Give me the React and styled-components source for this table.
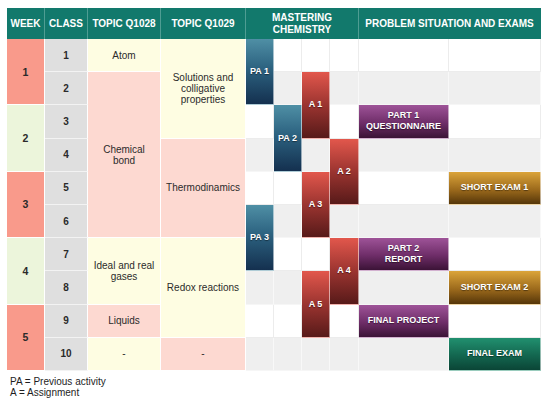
import React from "react";
import styled, { createGlobalStyle, css } from "styled-components";

const Global = createGlobalStyle`
  html, body { margin: 0; padding: 0; background: #ffffff; }
  body { font-family: "Liberation Sans", Arial, Helvetica, sans-serif; }
`;

const Page = styled.div`
  padding: 8px 0 0 7px;
  width: 550px;
  height: 403px;
  box-sizing: border-box;
  overflow: hidden;
`;

const Table = styled.div`
  display: grid;
  grid-template-columns: 38px 43px 73px 85px 28px 28px 28px 29px 90px 92px;
  grid-template-rows: 31px repeat(10, 33.2px);
  width: 534px;
`;

const place = css`
  grid-column: ${(p) => p.$col} / span ${(p) => p.$cspan || 1};
  grid-row: ${(p) => p.$row} / span ${(p) => p.$rspan || 1};
  box-sizing: border-box;
  display: flex;
  align-items: center;
  justify-content: center;
  text-align: center;
  white-space: nowrap;
`;

const HeadCell = styled.div`
  ${place};
  background: #12796c;
  color: #ffffff;
  font-weight: 700;
  font-size: 10px;
  line-height: 12px;
  border-right: 1px solid ${(p) => (p.$last ? "#12796c" : "#4f9d93")};
`;

const weekTones = { red: "#f99a8b", green: "#ecf5db" };
const WeekCell = styled.div`
  ${place};
  background: ${(p) => weekTones[p.$tone]};
  color: #2a2a2a;
  font-weight: 700;
  font-size: 10.5px;
  border-right: 1px solid #ffffff;
  border-bottom: 1px solid #ffffff;
`;

const ClassCell = styled.div`
  ${place};
  background: #dfdfdf;
  color: #2a2a2a;
  font-weight: 700;
  font-size: 10px;
  border-right: 1px solid #ffffff;
  border-bottom: 1px solid #f3f3f3;
`;

const topicTones = { yellow: "#fefde2", pink: "#fdd9d1" };
const TopicCell = styled.div`
  ${place};
  background: ${(p) => topicTones[p.$tone]};
  color: #2b2b2b;
  font-size: 10px;
  line-height: 11px;
  border-right: 1px solid #ffffff;
  border-bottom: 1px solid #ffffff;
`;

const SlotCell = styled.div`
  ${place};
  background: ${(p) => (p.$shade ? "#efefef" : "#ffffff")};
  border-right: 1px solid ${(p) => (p.$shade ? "#f8f8f8" : "#ececec")};
  border-bottom: 1px solid ${(p) => (p.$shade ? "#f6f6f6" : "#ececec")};
`;

const gradients = {
  pa: "linear-gradient(180deg, #4f8fa5 0%, #2c6280 45%, #14304f 100%)",
  a: "linear-gradient(180deg, #e2574c 0%, #9b3430 50%, #571a19 100%)",
  part: "linear-gradient(180deg, #9e5398 0%, #6e2d68 55%, #3b1336 100%)",
  exam: "linear-gradient(180deg, #dba43a 0%, #9c6a1c 55%, #553609 100%)",
  final: "linear-gradient(180deg, #21906f 0%, #13664f 55%, #0b4536 100%)",
};

const Block = styled.div`
  ${place};
  position: relative;
  z-index: 1;
  background: ${(p) => gradients[p.$kind]};
  color: #ffffff;
  font-weight: 700;
  font-size: 9px;
  line-height: 11px;
  text-shadow: 0 1px 1px rgba(0, 0, 0, 0.45);
  border-right: 1px solid rgba(255, 255, 255, 0.55);
  border-bottom: 1px solid rgba(255, 255, 255, 0.55);
`;

const Legend = styled.div`
  margin-top: 5px;
  padding-left: 3px;
  font-size: 10px;
  line-height: 11px;
  color: #1e1e1e;
`;

const headers = [
  { t: "WEEK", col: 1 },
  { t: "CLASS", col: 2 },
  { t: "TOPIC Q1028", col: 3 },
  { t: "TOPIC Q1029", col: 4 },
  { t: ["MASTERING", "CHEMISTRY"], col: 5, span: 4 },
  { t: "PROBLEM SITUATION AND EXAMS", col: 9, span: 2, last: true },
];

const weeks = [
  { n: 1, row: 2, tone: "red" },
  { n: 2, row: 4, tone: "green" },
  { n: 3, row: 6, tone: "red" },
  { n: 4, row: 8, tone: "green" },
  { n: 5, row: 10, tone: "red" },
];

const topics1028 = [
  { t: "Atom", row: 2, span: 1, tone: "yellow" },
  { t: ["Chemical", "bond"], row: 3, span: 5, tone: "pink" },
  { t: ["Ideal and real", "gases"], row: 8, span: 2, tone: "yellow" },
  { t: "Liquids", row: 10, span: 1, tone: "pink" },
  { t: "-", row: 11, span: 1, tone: "yellow" },
];

const topics1029 = [
  { t: ["Solutions and", "colligative", "properties"], row: 2, span: 3, tone: "yellow" },
  { t: "Thermodinamics", row: 5, span: 3, tone: "pink" },
  { t: "Redox reactions", row: 8, span: 3, tone: "yellow" },
  { t: "-", row: 11, span: 1, tone: "pink" },
];

const blocks = [
  { t: "PA 1", kind: "pa", col: 5, row: 2, span: 2 },
  { t: "PA 2", kind: "pa", col: 6, row: 4, span: 2 },
  { t: "PA 3", kind: "pa", col: 5, row: 7, span: 2 },
  { t: "A 1", kind: "a", col: 7, row: 3, span: 2 },
  { t: "A 2", kind: "a", col: 8, row: 5, span: 2 },
  { t: "A 3", kind: "a", col: 7, row: 6, span: 2 },
  { t: "A 4", kind: "a", col: 8, row: 8, span: 2 },
  { t: "A 5", kind: "a", col: 7, row: 9, span: 2 },
  { t: ["PART 1", "QUESTIONNAIRE"], kind: "part", col: 9, row: 4, span: 1 },
  { t: ["PART 2", "REPORT"], kind: "part", col: 9, row: 8, span: 1 },
  { t: "FINAL PROJECT", kind: "part", col: 9, row: 10, span: 1 },
  { t: "SHORT EXAM 1", kind: "exam", col: 10, row: 6, span: 1 },
  { t: "SHORT EXAM 2", kind: "exam", col: 10, row: 9, span: 1 },
  { t: "FINAL EXAM", kind: "final", col: 10, row: 11, span: 1 },
];

const Lines = ({ t }) =>
  Array.isArray(t)
    ? t.map((l, i) => (
        <React.Fragment key={i}>
          {i > 0 && <br />}
          {l}
        </React.Fragment>
      ))
    : t;

export default function App() {
  const slots = [];
  for (let r = 2; r <= 11; r++) {
    for (let c = 5; c <= 10; c++) {
      slots.push(<SlotCell key={`s${r}-${c}`} $col={c} $row={r} $shade={r % 2 === 1} />);
    }
  }
  return (
    <Page>
      <Global />
      <Table>
        {headers.map((h) => (
          <HeadCell key={h.col} $col={h.col} $row={1} $cspan={h.span} $last={h.last}>
            <span>
              <Lines t={h.t} />
            </span>
          </HeadCell>
        ))}
        {weeks.map((w) => (
          <WeekCell key={w.n} $col={1} $row={w.row} $rspan={2} $tone={w.tone}>
            {w.n}
          </WeekCell>
        ))}
        {Array.from({ length: 10 }, (_, i) => (
          <ClassCell key={i} $col={2} $row={i + 2}>
            {i + 1}
          </ClassCell>
        ))}
        {topics1028.map((t) => (
          <TopicCell key={`a${t.row}`} $col={3} $row={t.row} $rspan={t.span} $tone={t.tone}>
            <span>
              <Lines t={t.t} />
            </span>
          </TopicCell>
        ))}
        {topics1029.map((t) => (
          <TopicCell key={`b${t.row}`} $col={4} $row={t.row} $rspan={t.span} $tone={t.tone}>
            <span>
              <Lines t={t.t} />
            </span>
          </TopicCell>
        ))}
        {slots}
        {blocks.map((b, i) => (
          <Block key={i} $col={b.col} $row={b.row} $rspan={b.span} $kind={b.kind}>
            <span>
              <Lines t={b.t} />
            </span>
          </Block>
        ))}
      </Table>
      <Legend>
        PA = Previous activity
        <br />A = Assignment
      </Legend>
    </Page>
  );
}
